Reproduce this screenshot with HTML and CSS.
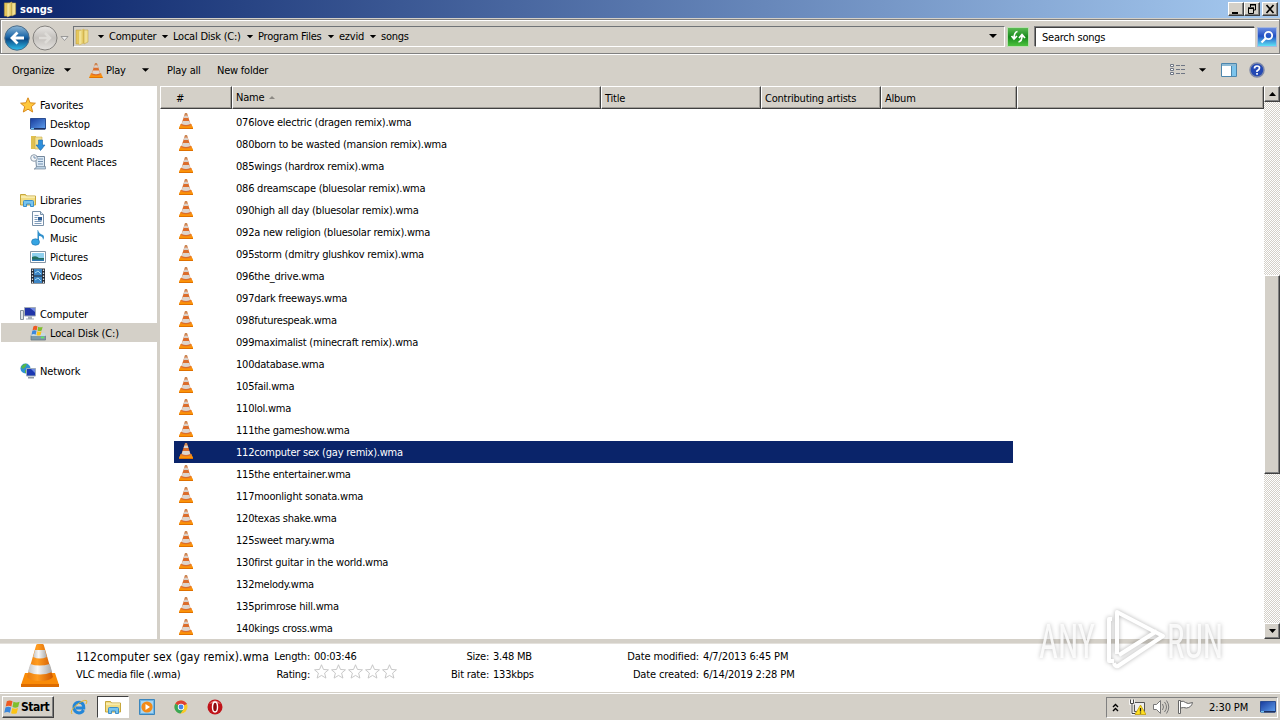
FILE: index.html
```html
<!DOCTYPE html>
<html lang="en">

<head>
    <meta charset="UTF-8">
    <meta name="viewport" content="width=device-width, initial-scale=1.0">
    <title>songs</title>
    <link rel="stylesheet" href="styles.css">
</head>

<body>
    <!-- shared icons -->
    <svg class="sprite" width="0" height="0">
        <defs>
            <linearGradient id="gOrange" x1="0" x2="1" y1="0" y2="0">
                <stop offset="0" stop-color="#e87c10"/><stop offset=".4" stop-color="#ff9c20"/><stop offset="1" stop-color="#cf5800"/>
            </linearGradient>
            <linearGradient id="gWhite" x1="0" x2="1" y1="0" y2="0">
                <stop offset="0" stop-color="#c4c4c4"/><stop offset=".4" stop-color="#f8f8f8"/><stop offset="1" stop-color="#a8a8a8"/>
            </linearGradient>
            <linearGradient id="gFolder" x1="0" x2="1" y1="0" y2="0">
                <stop offset="0" stop-color="#faf3b8"/><stop offset="1" stop-color="#dcbb48"/>
            </linearGradient>
            <linearGradient id="gScreen" x1="0" x2="1" y1="0" y2="1">
                <stop offset="0" stop-color="#173a9c"/><stop offset="1" stop-color="#5fa0ee"/>
            </linearGradient>
            <linearGradient id="gBack" x1="0" x2="0" y1="0" y2="1">
                <stop offset="0" stop-color="#8fb8d8"/><stop offset=".45" stop-color="#1c67a8"/><stop offset=".55" stop-color="#0b4a86"/><stop offset="1" stop-color="#30c0ee"/>
            </linearGradient>
            <linearGradient id="gFwd" x1="0" x2="0" y1="0" y2="1">
                <stop offset="0" stop-color="#e8e6e3"/><stop offset=".5" stop-color="#c4c1bd"/><stop offset="1" stop-color="#e4e2df"/>
            </linearGradient>
        </defs>
        <symbol id="cone" viewBox="0 0 38 44">
            <path d="M4 29h30l4 12q0 1-1 1H1q-1 0-1-1z" fill="#f98b08"/>
            <path d="M0 40h38v3H0z" fill="#dd6c00"/>
            <path d="M16.500 0h5q1 0 1.300 1L32 33q-3 4-13 4T6 33L15.200 1q.3-1 1.300-1z" fill="url(#gOrange)"/>
            <path d="M14 6h10l1.800 7q-7 3-13.600 0z" fill="url(#gWhite)"/>
            <path d="M9.200 20q9 3 19.600 0l2.300 8q-12 5-24.200 0z" fill="url(#gWhite)"/>
        </symbol>
        <symbol id="cone-sm" viewBox="0 0 14 16">
            <path d="M1.500 11h11l1.500 5H0z" fill="#f58a1c"/>
            <path d="M.3 13.500h13.400L14 16H0z" fill="#fb9406"/>
            <path d="M0 15h14v1H0z" fill="#e07000"/>
            <path d="M6 0h2l3.800 12q-4.800 2.500-9.600 0z" fill="#dc6d2c"/>
            <path d="M5.400 2.500h3.200l.8 2.500H4.600z" fill="#d9d2cc"/>
            <path d="M3.600 8h6.800l.9 3Q7 13 2.700 11z" fill="#ddd5ce"/>
            <path d="M6 0h2v2H6z" fill="#c98a58"/>
        </symbol>
        <symbol id="folder" viewBox="0 0 16 18">
            <path d="M2 2h5v14H2z" fill="#e6c75c" stroke="#b99a3a" stroke-width=".5"/>
            <path d="M5 3l5-2v14l-5 2z" fill="url(#gFolder)" stroke="#d2b658" stroke-width=".5"/>
            <path d="M10 2h4v12l-4 2z" fill="#f1df90" stroke="#b99a3a" stroke-width=".5"/>
        </symbol>
        <symbol id="libs" viewBox="0 0 16 16">
            <path d="M.5 2.500h5l1 1.500h9v9H.5z" fill="#f1dc83" stroke="#c7a73c"/>
            <path d="M1 5h14" stroke="#fff9d0"/>
            <path d="M3.500 14.500v-5q0-1 1-1h8q1 0 1 1v5h-3v-2.500h-4v2.500z" fill="#77c4ee" stroke="#3c8fc9"/>
        </symbol>
        <symbol id="desktop" viewBox="0 0 16 16">
            <path d="M.5 2.500h15v10.500H.5z" fill="url(#gScreen)" stroke="#2a4d92"/>
            <path d="M1 12h14v1.500H1z" fill="#1c3060"/><path d="M1 12h3v1.500H1z" fill="#6fc0f0"/>
        </symbol>
        <symbol id="star" viewBox="0 0 16 16">
            <path d="M8 .8l2.100 5 5.300.4-4.100 3.500 1.400 5.300L8 12.200 3.300 15l1.400-5.300L.6 6.200l5.300-.4z"/>
        </symbol>
        <symbol id="down" viewBox="0 0 10 5"><path d="M1 0h8L5 4z"/></symbol>
        <symbol id="winflag" viewBox="0 0 18 16">
            <path d="M3 2q3-2 6 0L7.800 7.500Q5 6 1.800 7.500z" fill="#ee5a22"/>
            <path d="M10 2.500q3 1.500 6.500 0L15 8q-3 1.500-6 0z" fill="#7fbf2c"/>
            <path d="M1.500 8.500q3-1.500 6 0L6.300 14Q3.500 12.500.3 14z" fill="#3a87dc"/>
            <path d="M8.800 9q3 1.500 6 0l-1.300 5.500q-3 1.500-6 0z" fill="#fcc414"/>
        </symbol>
    </svg>

    <div class="window">
        <div class="titlebar">
            <svg class="title-icon" width="16" height="17"><use href="#folder"/></svg>
            <span class="title">songs</span>
            <div class="win-btn"><svg width="14" height="12"><path d="M3 9h6v2H3z"/></svg></div>
            <div class="win-btn"><svg width="14" height="12" fill="none" stroke="#000"><path d="M5 2h6M5.500 2v2M10.500 2v5H9M3 5.500h6M3.500 5v5.500h5V5"/><path d="M5 1.500h6M3 4.800h6"/></svg></div>
            <div class="win-btn close"><svg width="14" height="12"><path d="M3.500 2l7 8M10.500 2l-7 8" stroke="#000" stroke-width="1.700"/></svg></div>
        </div>

        <div class="addressbar">
            <svg class="nav-buttons" width="70" height="30">
                <circle cx="17" cy="15" r="12.200" fill="url(#gBack)" stroke="#4b6c88"/>
                <path d="M17.500 9.500L12 15l5.500 5.500M12.500 15H24" fill="none" stroke="#fff" stroke-width="2.800"/>
                <circle cx="45" cy="15" r="12" fill="url(#gFwd)" stroke="#84827f"/>
                <path d="M45 10l5 5-5 5M39 15h10" fill="none" stroke="#dedcd8" stroke-width="2.500"/>
                <path d="M61 13.500h7l-3.500 4z" fill="#eee" stroke="#888" stroke-width=".8"/>
            </svg>
            <div class="path">
                <svg width="16" height="18"><use href="#folder"/></svg>
                <div class="crumbs">
                    <svg class="arr" width="8" height="4"><use href="#down"/></svg><span class="c1">Computer</span>
                    <svg class="arr" width="8" height="4"><use href="#down"/></svg><span class="c2">Local Disk (C:)</span>
                    <svg class="arr" width="8" height="4"><use href="#down"/></svg><span class="c3">Program Files</span>
                    <svg class="arr" width="8" height="4"><use href="#down"/></svg><span class="c4">ezvid</span>
                    <svg class="arr" width="8" height="4"><use href="#down"/></svg><span>songs</span>
                </div>
                <svg class="path-drop" width="10" height="5"><use href="#down"/></svg>
            </div>
            <div class="refresh"><svg width="20" height="18" fill="none" stroke="#fff" stroke-width="1.700"><path d="M9.500 3.500Q6 4 6 11M3.500 8L6 11 9 8M10.500 14q4-.5 3.500-8M11 10l3-3.500 3 3.500"/></svg></div>
            <div class="search">Search songs</div>
            <div class="search-btn"><svg width="18" height="19" fill="none" stroke="#fff"><circle cx="10.500" cy="7.500" r="3.700" stroke-width="1.800"/><path d="M8 10L3.500 14.500" stroke-width="2.300"/></svg></div>
        </div>

        <div class="toolbar">
            <span class="t-org">Organize</span><svg width="9" height="5"><use href="#down"/></svg>
            <svg class="t-cone" width="14" height="15"><use href="#cone-sm"/></svg><span class="t-play">Play</span><svg width="9" height="5"><use href="#down"/></svg>
            <span class="t-all">Play all</span>
            <span>New folder</span>
            <div class="tools-right">
                <svg width="16" height="14" fill="#fff" stroke="#6f7684"><path d="M.5 1.500h3v2h-3zM.5 5.500h3v2h-3zM.5 9.500h3v2h-3z"/><path d="M6 2.500h4M11 2.500h4M6 6.500h4M11 6.500h4M6 10.500h4M11 10.500h4"/></svg>
                <svg class="t-drop" width="9" height="5"><use href="#down"/></svg>
                <svg class="t-pane" width="16" height="14"><path d="M.5.5h15v13H.5z" fill="#fff" stroke="#4c86ad"/><path d="M1 1h14v2H1z" fill="#8dbbd6"/><path d="M11 3h4v10h-4z" fill="#7cc4ec"/><path d="M10.500 3v10" stroke="#4c86ad"/></svg>
                <svg width="16" height="16"><circle cx="8" cy="8" r="7" fill="#2449b4" stroke="#7d88a8" stroke-width="1.500"/><path d="M5.500 6.500Q5.500 4 8 4t2.500 2Q10.500 7.500 8 9v1" fill="none" stroke="#fff" stroke-width="1.700"/><path d="M7.200 11h1.700v1.700H7.200z" fill="#fff"/></svg>
            </div>
        </div>

        <div class="main">
            <div class="sidebar">
                <div class="item top"><svg class="fav" width="16" height="16"><use href="#star"/></svg><span>Favorites</span></div>
                <div class="item"><svg width="16" height="16"><use href="#desktop"/></svg><span>Desktop</span></div>
                <div class="item"><svg width="16" height="16"><path d="M1 1h5v13H1z" fill="#e0c050"/><path d="M5 2h7v12H5z" fill="#f4e291" stroke="#c9ab4c" stroke-width=".6"/><path d="M8.500 5h4v5H15l-4.500 5.500L6 10h2.500z" fill="#2e8fdc" stroke="#1b68ae" stroke-width=".6"/></svg><span>Downloads</span></div>
                <div class="item"><svg width="16" height="16"><path d="M5.500 2.500h9v11h-8z" fill="#dbe9f5" stroke="#75889c"/><path d="M7 12.500h8.500v2.500H4q2 0 2-2z" fill="#b8cfe2" stroke="#75889c" stroke-width=".7"/><circle cx="4" cy="4" r="3.300" fill="#f4f6f8" stroke="#8d9cab"/><path d="M4 2v2h2M8 5h5M8 7.500h5M8 10h5" stroke="#7390b0" fill="none"/></svg><span>Recent Places</span></div>
                <div class="item top gap"><svg width="16" height="16"><use href="#libs"/></svg><span>Libraries</span></div>
                <div class="item"><svg width="16" height="16"><path d="M2.500.5h8l3 3v11h-11z" fill="#fcfdff" stroke="#7890a8"/><path d="M10.500.5v3h3" fill="#d5e3ef" stroke="#7890a8"/><path d="M4.500 4.500h4M4.500 6.500h3M4.500 8.500h3M4.500 10.500h7M4.500 12.500h7" stroke="#7f9cba"/><path d="M8 6h4v3.500H8z" fill="#2c5c94"/></svg><span>Documents</span></div>
                <div class="item"><svg width="16" height="16"><path d="M8 0q1 4 5 5 2 2 0 5 0-4-4-4v6H7.500V0z" fill="#3090cc"/><ellipse cx="5.500" cy="12" rx="4" ry="3.200" fill="#36a4e2" stroke="#1d6faa" stroke-width=".6"/></svg><span>Music</span></div>
                <div class="item"><svg width="16" height="16"><path d="M.5 2.500h15v11H.5z" fill="#fff" stroke="#8595a5"/><path d="M2 4h12v8H2z" fill="#8fd0ee"/><path d="M2 8q4-2 7 1l5 0v3H2z" fill="#23705f"/><path d="M2 10.500h12V12H2z" fill="#2d78b4"/></svg><span>Pictures</span></div>
                <div class="item"><svg width="16" height="16"><path d="M1 .5h14v15H1z" fill="#242a33"/><path d="M4 1h8v6.500H4zM4 8.500h8V15H4z" fill="#3d86c6"/><path d="M5 5l3-2 3 3M5 12l3-2 3 3" stroke="#a9dcf0" fill="none"/><path d="M2.500 1.500v14M13.500 1.500v14" stroke="#dde3e9" stroke-width="1.300" stroke-dasharray="1.500 1.500"/></svg><span>Videos</span></div>
                <div class="item top gap"><svg width="16" height="16"><path d="M.5 4.500h3v9h-3z" fill="#dfe3e6" stroke="#83909b"/><path d="M4.500 1.500h11v8.500h-11z" fill="#2135a8" stroke="#a3acb8"/><path d="M10 2h5v4z" fill="#7189e0"/><path d="M8 10.500h4v2h2v1H6v-1h2z" fill="#a4adb6"/></svg><span>Computer</span></div>
                <div class="item selected"><svg width="16" height="16"><path d="M1 10.500h14.500V15H1z" fill="#7d9aa8" stroke="#60747f" stroke-width=".7"/><path d="M2.500 8h12l1.500 3H1z" fill="#c8d8e0"/><path d="M11 12.500h3" stroke="#5bf060" stroke-width="1.500"/><svg x="1" y="0" width="13" height="11"><use href="#winflag"/></svg></svg><span>Local Disk (C:)</span></div>
                <div class="item top gap"><svg width="16" height="16"><circle cx="5.500" cy="5.500" r="5" fill="#2f8fd4"/><path d="M1 4q3-4 6-3-1 3-4 5zM5 7q3 0 3 3l-3 0z" fill="#55b848"/><path d="M6.500 5.500h9v7.500h-9z" fill="#1b39b2" stroke="#9eacba"/><path d="M11 6h4v4z" fill="#6c8ae4"/><path d="M8 14h6v1.500H8z" fill="#8e98a2"/></svg><span>Network</span></div>
            </div>

            <div class="files">
                <div class="header">
                    <div class="col num">#</div>
                    <div class="col name">Name <svg width="6" height="3"><path d="M3 0l3 3H0z" fill="#8c8984"/></svg></div>
                    <div class="col tit">Title</div>
                    <div class="col artists">Contributing artists</div>
                    <div class="col album">Album</div>
                    <div class="col rest"></div>
                </div>
                <div class="list">
                    <div class="row"><svg><use href="#cone-sm"/></svg><span>076love electric (dragen remix).wma</span></div>
                    <div class="row"><svg><use href="#cone-sm"/></svg><span>080born to be wasted (mansion remix).wma</span></div>
                    <div class="row"><svg><use href="#cone-sm"/></svg><span>085wings (hardrox remix).wma</span></div>
                    <div class="row"><svg><use href="#cone-sm"/></svg><span>086 dreamscape (bluesolar remix).wma</span></div>
                    <div class="row"><svg><use href="#cone-sm"/></svg><span>090high all day (bluesolar remix).wma</span></div>
                    <div class="row"><svg><use href="#cone-sm"/></svg><span>092a new religion (bluesolar remix).wma</span></div>
                    <div class="row"><svg><use href="#cone-sm"/></svg><span>095storm (dmitry glushkov remix).wma</span></div>
                    <div class="row"><svg><use href="#cone-sm"/></svg><span>096the_drive.wma</span></div>
                    <div class="row"><svg><use href="#cone-sm"/></svg><span>097dark freeways.wma</span></div>
                    <div class="row"><svg><use href="#cone-sm"/></svg><span>098futurespeak.wma</span></div>
                    <div class="row"><svg><use href="#cone-sm"/></svg><span>099maximalist (minecraft remix).wma</span></div>
                    <div class="row"><svg><use href="#cone-sm"/></svg><span>100database.wma</span></div>
                    <div class="row"><svg><use href="#cone-sm"/></svg><span>105fail.wma</span></div>
                    <div class="row"><svg><use href="#cone-sm"/></svg><span>110lol.wma</span></div>
                    <div class="row"><svg><use href="#cone-sm"/></svg><span>111the gameshow.wma</span></div>
                    <div class="row active"><svg><use href="#cone-sm"/></svg><span>112computer sex (gay remix).wma</span></div>
                    <div class="row"><svg><use href="#cone-sm"/></svg><span>115the entertainer.wma</span></div>
                    <div class="row"><svg><use href="#cone-sm"/></svg><span>117moonlight sonata.wma</span></div>
                    <div class="row"><svg><use href="#cone-sm"/></svg><span>120texas shake.wma</span></div>
                    <div class="row"><svg><use href="#cone-sm"/></svg><span>125sweet mary.wma</span></div>
                    <div class="row"><svg><use href="#cone-sm"/></svg><span>130first guitar in the world.wma</span></div>
                    <div class="row"><svg><use href="#cone-sm"/></svg><span>132melody.wma</span></div>
                    <div class="row"><svg><use href="#cone-sm"/></svg><span>135primrose hill.wma</span></div>
                    <div class="row"><svg><use href="#cone-sm"/></svg><span>140kings cross.wma</span></div>
                </div>
            </div>

            <div class="scrollbar">
                <div class="sb-btn"><svg width="7" height="4"><path d="M3.500 0L7 4H0z"/></svg></div>
                <div class="sb-track"><div class="sb-thumb"></div></div>
                <div class="sb-btn"><svg width="7" height="4"><path d="M0 0h7L3.500 4z"/></svg></div>
            </div>
        </div>

        <div class="details">
            <svg class="big-cone" width="38" height="44"><use href="#cone"/></svg>
            <div class="d-name"><p class="d-title">112computer sex (gay remix).wma</p><p>VLC media file (.wma)</p></div>
            <div class="d-grid g1">
                <span>Length:</span><span>00:03:46</span>
                <span>Rating:</span><span class="stars"><svg><use href="#star"/></svg><svg><use href="#star"/></svg><svg><use href="#star"/></svg><svg><use href="#star"/></svg><svg><use href="#star"/></svg></span>
            </div>
            <div class="d-grid g2">
                <span>Size:</span><span>3.48 MB</span>
                <span>Bit rate:</span><span>133kbps</span>
            </div>
            <div class="d-grid g3">
                <span>Date modified:</span><span>4/7/2013 6:45 PM</span>
                <span>Date created:</span><span>6/14/2019 2:28 PM</span>
            </div>
        </div>
    </div>

    <div class="taskbar">
        <div class="start"><svg width="17" height="16"><use href="#winflag"/></svg><span>Start</span></div>
        <div class="quick">
            <div class="q"><svg width="18" height="16"><path d="M13.500 11Q12 14 9 14q-5-.5-5-5.500T9 3.200q5 .3 4.800 5.800H6" fill="none" stroke="#2386d8" stroke-width="3"/><path d="M2 15Q-.5 12 6 6.500 13 .5 16.500 1.500q1 1-.5 3.500" fill="none" stroke="#e8b62c" stroke-width="1"/></svg></div>
            <div class="q open"><svg width="16" height="16"><use href="#libs"/></svg></div>
            <div class="q"><svg width="16" height="16"><path d="M.5.5h15v15H.5z" fill="#6cb3e4" stroke="#3b86bd"/><path d="M2 2h12v12H2z" fill="#a7d5f2"/><circle cx="8" cy="8" r="5.600" fill="#f28a18"/><path d="M6.500 5l4.500 3-4.500 3z" fill="#fff"/></svg></div>
            <div class="q"><svg width="14" height="14"><circle cx="7" cy="7" r="6.500" fill="#f9c927"/><path d="M7 7L1.300 3.700A6.500 6.500 0 0 1 12.800 4z" fill="#dd4035"/><path d="M7 7L1.300 3.700A6.500 6.500 0 0 0 6.500 13.500L9.700 9z" fill="#3aa757"/><path d="M7 4h5.800L12 3.100H7z" fill="#dd4035"/><circle cx="7" cy="7" r="3.200" fill="#fff"/><circle cx="7" cy="7" r="2.400" fill="#4384e8"/></svg></div>
            <div class="q"><svg width="16" height="16"><circle cx="8" cy="8" r="7.500" fill="#c01319"/><path d="M2 5q6-7 12 0-6-2-12 0z" fill="#e57070"/><ellipse cx="8" cy="8" rx="2.500" ry="5" fill="#8e0b10" stroke="#fff" stroke-width="1.400"/></svg></div>
        </div>
        <div class="tray">
            <svg class="chev" width="7" height="9" fill="none" stroke="#000" stroke-width="1.400"><path d="M1 4l2.500-2.500L6 4M1 8l2.500-2.500L6 8"/></svg>
            <svg class="net" width="17" height="17"><path d="M5.500 3.500h10v9h-10z" fill="#eee" stroke="#555"/><path d="M1.500.5v4h3v-4M3 4v10.500h3" fill="none" stroke="#fff" stroke-width="2.500"/><path d="M1.500.5v4h3v-4M3 4.500v10h3" fill="none" stroke="#444"/><path d="M11.500 6L17 15.500H6z" fill="#ffdf20" stroke="#b99400" stroke-width=".7"/><path d="M11.500 9v3.500M11.500 13.500v1" stroke="#222" stroke-width="1.300"/></svg>
            <svg class="snd" width="17" height="16" fill="none" stroke="#777"><path d="M.5 5.500h3l4-4v13l-4-4h-3z" fill="#fff"/><path d="M9.500 5q2 3 0 6M11.500 3q4 5 0 10M13.500 1.500q4.500 6.500 0 13"/></svg>
            <svg class="flg" width="17" height="16"><path d="M1.500 1.500h2v13h-2z" fill="#fff" stroke="#666"/><path d="M3.500 2.500q3-1 5 1t7 0q-1 5-6 5.500-3-1-6 0z" fill="#fff" stroke="#666"/></svg>
            <span class="clock">2:30 PM</span>
            <svg width="16" height="16"><use href="#desktop"/></svg>
        </div>
    </div>

    <svg class="watermark" width="245" height="100">
        <g fill="#fff" fill-opacity=".85">
            <text transform="translate(9 58) scale(.67 1)">ANY</text>
            <text transform="translate(137 58) scale(.67 1)">RUN</text>
            <path class="mark" d="M82 19h-3v42h5M87 54V12l46 24-45 30q-3 1-4-3M89 55l38-24"/>
        </g>
    </svg>
</body>

</html>
```
FILE: styles.css
```css
body {
    margin: 0;
    width: 1280px;
    height: 720px;
    overflow: hidden;
    background: #d4d0c8;
    color: #000;
    font-family: Tahoma, "DejaVu Sans Condensed", "DejaVu Sans", sans-serif;
    font-stretch: condensed;
    font-size: 11px;
    letter-spacing: -0.23px;
    white-space: nowrap;
}

svg {
    display: block;
    flex: none;
}

.sprite {
    position: absolute;
}

.window {
    height: 692px;
    display: flex;
    flex-direction: column;
}

/* title bar */
.titlebar {
    height: 18px;
    display: flex;
    align-items: center;
    background: linear-gradient(90deg, #0a246a, #a6caf0);
    color: #fff;
    padding: 0 2px;
}

.title-icon {
    margin-right: 2px;
}

.title {
    flex: 1;
    font-weight: bold;
    letter-spacing: 0;
}

.win-btn {
    width: 14px;
    height: 12px;
    background: #d4d0c8;
    border: 1px solid;
    border-color: #fff #404040 #404040 #fff;
    box-shadow: inset -1px -1px #808080;
}

.close {
    margin-left: 2px;
}

/* address bar */
.addressbar {
    height: 33px;
    margin-top: 1px;
    display: flex;
    align-items: center;
    border: 1px solid #808080;
    box-shadow: inset 1px 1px #fff, 0 1px #fff;
}

.nav-buttons {
    margin: 2px 3px 0 -1px;
}

.path {
    width: 930px;
    height: 19px;
    display: flex;
    align-items: center;
    border: 1px solid;
    border-color: #6f7376 #fff #fff #6f7376;
}

.crumbs {
    flex: 1;
    display: flex;
    align-items: center;
    padding-left: 7px;
}

.arr {
    margin-right: 4px;
}

.c1 { width: 52px; }
.c2 { width: 73px; }
.c3 { width: 69px; }
.c4 { width: 30px; }

.path-drop {
    margin-right: 6px;
}

.refresh {
    width: 20px;
    height: 18px;
    margin-left: 2px;
    background: linear-gradient(#5cba54, #168a1c 50%, #4cc23e);
    border: 1px solid #b9dfb0;
}

.search {
    width: 212px;
    height: 18px;
    line-height: 19px;
    margin-left: 6px;
    padding-left: 6px;
    background: #fff;
    border: 1px solid;
    border-color: #404040 #fff #fff #404040;
    box-shadow: -1px -1px #808080;
}

.search-btn {
    width: 20px;
    height: 20px;
    margin-left: 2px;
    background: linear-gradient(#6a8ce0, #2250c4 45%, #5ee0f4);
    border: 1px solid #a8b8dc;
    box-sizing: border-box;
}

/* toolbar */
.toolbar {
    height: 32px;
    display: flex;
    align-items: center;
    padding: 0 15px 0 12px;
}

.t-org { width: 51px; }
.t-cone { margin: 0 3px 0 17px; }
.t-play { width: 35px; }
.t-all { width: 50px; margin-left: 17px; }

.tools-right {
    margin-left: auto;
    display: flex;
    align-items: center;
}

.t-drop { margin-left: 12px; }
.t-pane { margin: 0 12px 0 14px; }

/* explorer body */
.main {
    height: 553px;
    display: flex;
}

.sidebar {
    width: 157px;
    padding-top: 9px;
    box-sizing: border-box;
    background: #fff;
    letter-spacing: -0.15px;
}

.item {
    height: 19px;
    display: flex;
    align-items: center;
    gap: 4px;
    margin-left: 1px;
    padding-left: 29px;
}

.item span {
    padding-top: 1px;
}

.item.top {
    padding-left: 19px;
}

.item.gap {
    margin-top: 19px;
}

.item.selected {
    background: #d4d0c8;
}

.fav {
    fill: #ffc83c;
    stroke: #d98a1c;
}

.files {
    flex: 1;
    margin-left: 3px;
    background: #fff;
}

.header {
    height: 23px;
    display: flex;
    background: #d4d0c8;
}

.col {
    box-sizing: border-box;
    line-height: 23px;
    padding-left: 4px;
    border: 1px solid;
    border-color: #fff #404040 #404040 #fff;
    box-shadow: inset -1px -1px #a09d97;
}

.num { width: 72px; padding-left: 15px; }
.name { width: 369px; padding-left: 3px; display: flex; align-items: center; gap: 5px; }
.tit { width: 160px; padding-left: 3px; }
.artists { width: 120px; padding-left: 3px; }
.album { width: 136px; padding-left: 3px; }
.rest { flex: 1; }

.list {
    padding: 2px 0 0 14px;
}

.row {
    width: 839px;
    height: 22px;
    display: flex;
    align-items: center;
    box-sizing: border-box;
    padding-left: 5px;
}

.row svg {
    width: 14px;
    height: 16px;
    margin: 0 43px 2px 0;
}

.row.active {
    background: #0a246a;
    color: #fff;
}

.scrollbar {
    width: 16px;
    display: flex;
    flex-direction: column;
}

.sb-btn, .sb-thumb {
    box-sizing: border-box;
    background: #d4d0c8;
    border: 1px solid;
    border-color: #fff #404040 #404040 #fff;
    box-shadow: inset -1px -1px #808080;
}

.sb-btn {
    height: 16px;
    display: flex;
    align-items: center;
    justify-content: center;
}

.sb-track {
    flex: 1;
    background: repeating-conic-gradient(#d4d0c8 0 25%, #fff 0 50%) 0 0 / 2px 2px;
}

.sb-thumb {
    height: 199px;
    margin-top: 173px;
}

/* details pane */
.details {
    height: 48px;
    margin-top: 4px;
    display: flex;
    background: #fff;
    border-top: 1px solid #e4e1dc;
}

.big-cone {
    margin: 0 17px 0 21px;
}

.details p {
    margin: 0;
}

.d-name, .d-grid {
    padding-top: 4px;
    line-height: 18px;
}

.d-name {
    width: 197px;
}

.d-title {
    font-size: 12px;
    letter-spacing: 0.1px;
}

.d-grid {
    display: grid;
    grid-template-rows: 18px 18px;
    column-gap: 4px;
}

.d-grid span:nth-child(odd) {
    text-align: right;
}

.g1 { grid-template-columns: 37px 90px; }
.g2 { grid-template-columns: 85px 80px; }
.g3 { grid-template-columns: 126px 110px; letter-spacing: -0.13px; }

.stars {
    display: flex;
    margin-top: -2px;
}

.stars svg {
    width: 15px;
    height: 15px;
    margin-right: 2px;
    fill: #fff;
    stroke: #c4c4c4;
}

/* taskbar */
.taskbar {
    height: 28px;
    display: flex;
    align-items: center;
    box-sizing: border-box;
    border-top: 1px solid #d4d0c8;
    box-shadow: inset 0 1px #fff;
    padding: 1px 2px 0;
}

.start {
    width: 52px;
    height: 22px;
    box-sizing: border-box;
    display: flex;
    align-items: center;
    padding-left: 1px;
    border: 1px solid;
    border-color: #fff #404040 #404040 #fff;
    box-shadow: inset -1px -1px #808080;
    font-size: 12px;
    font-weight: bold;
    letter-spacing: -0.5px;
}

.quick {
    flex: 1;
    display: flex;
    padding-left: 9px;
    gap: 2px;
}

.q {
    width: 32px;
    height: 22px;
    display: flex;
    align-items: center;
    justify-content: center;
    box-sizing: border-box;
}

.q.open {
    background: #fff;
    border: 1px solid;
    border-color: #404040 #fff #fff #404040;
}

.tray {
    width: 172px;
    height: 21px;
    box-sizing: border-box;
    display: flex;
    align-items: center;
    padding-left: 5px;
    border: 1px solid;
    border-color: #808080 #fff #fff #808080;
}

.chev { margin-right: 10px; }
.net, .snd { margin-right: 7px; }
.clock { width: 51px; margin-left: 15px; letter-spacing: -0.1px; }

.watermark {
    position: absolute;
    left: 1030px;
    top: 600px;
    filter: drop-shadow(0 0 2px rgba(0, 0, 0, 0.3));
    font-family: Roboto, sans-serif;
    font-size: 49px;
    letter-spacing: 0;
}

.mark {
    fill: none;
    stroke: #fff;
    stroke-width: 4;
    stroke-linejoin: round;
}
```
